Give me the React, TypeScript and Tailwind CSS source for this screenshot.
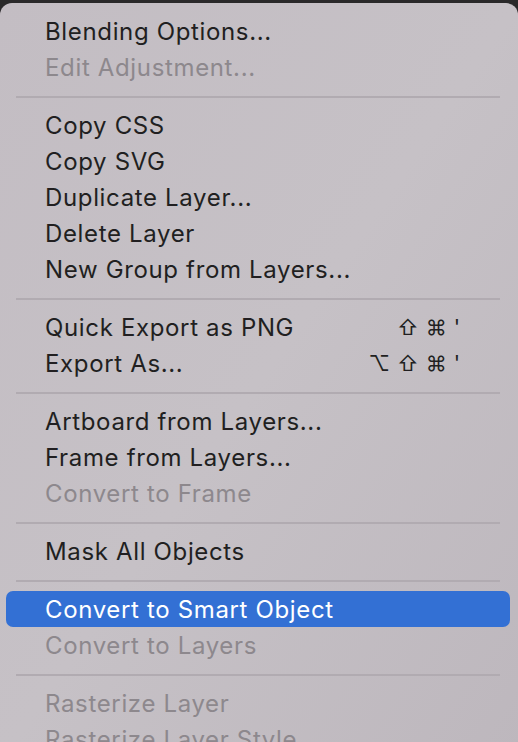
const items: (null | { label: string; disabled?: boolean; active?: boolean; shortcut?: string })[] = [
  { label: "Blending Options..." },
  { label: "Edit Adjustment...", disabled: true },
  null,
  { label: "Copy CSS" },
  { label: "Copy SVG" },
  { label: "Duplicate Layer..." },
  { label: "Delete Layer" },
  { label: "New Group from Layers..." },
  null,
  { label: "Quick Export as PNG", shortcut: "⇧⌘'" },
  { label: "Export As...", shortcut: "⌥⇧⌘'" },
  null,
  { label: "Artboard from Layers..." },
  { label: "Frame from Layers..." },
  { label: "Convert to Frame", disabled: true },
  null,
  { label: "Mask All Objects" },
  null,
  { label: "Convert to Smart Object", active: true },
  { label: "Convert to Layers", disabled: true },
  null,
  { label: "Rasterize Layer", disabled: true },
  { label: "Rasterize Layer Style", disabled: true },
];

const App = () => {
  return (
    <div
      className="w-[518px] h-[742px] overflow-hidden bg-[#2a292a] pt-[3px]"
      style={{ fontFamily: "Inter, 'Noto Sans', sans-serif" }}
    >
      <div className="h-[760px] rounded-t-[12px] bg-gradient-to-br from-[#c3bdc3] via-[#c6c1c6] to-[#bdb7bd] pt-[10px]">
        {items.map((item, i) => {
          if (item === null) {
            return (
              <div key={i} className="h-[22px] pt-[11px] pl-[16px] pr-[18px]">
                <div className="h-[2px] bg-[#b1abb1]" />
              </div>
            );
          }
          return (
            <div
              key={i}
              className={
                "h-9 pt-[1px] flex items-center text-[24px] tracking-[0.65px] whitespace-nowrap " +
                (item.active
                  ? "ml-[6px] mr-[8px] pl-[39px] rounded-[7px] bg-[#3370d4] text-white"
                  : "pl-[45px] pr-[58px] " + (item.disabled ? "text-[#8d888d]" : "text-[#211f21]"))
              }
            >
              <span className="flex-1">{item.label}</span>
              {item.shortcut && (
                <span className="text-[21px] tracking-[7px] -mr-[7px] text-[#211f21]">{item.shortcut}</span>
              )}
            </div>
          );
        })}
      </div>
    </div>
  );
};

export default App;
